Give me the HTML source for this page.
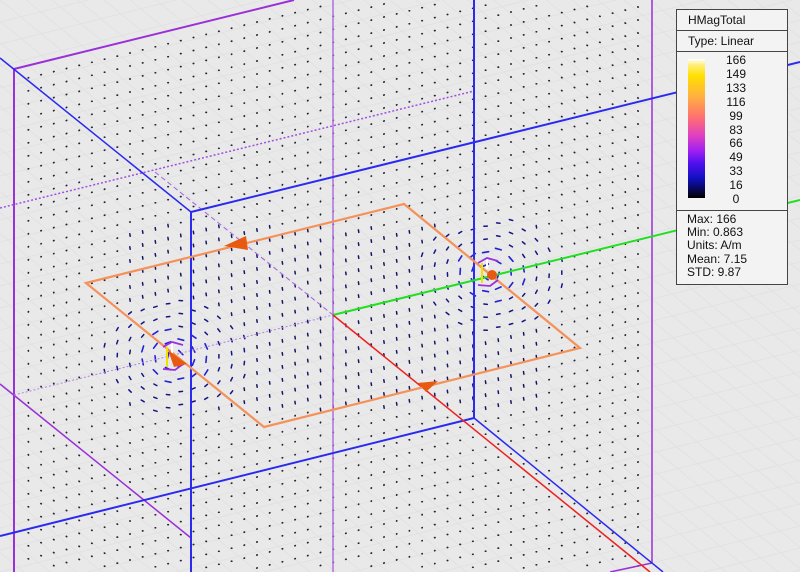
<!DOCTYPE html>
<html><head><meta charset="utf-8">
<style>
html,body{margin:0;padding:0;background:#e9e9e9;width:800px;height:572px;overflow:hidden;}
#wrap{position:relative;width:800px;height:572px;overflow:hidden;background:#e9e9e9;font-family:"Liberation Sans",sans-serif;}
svg{position:absolute;left:0;top:0;overflow:hidden;}
#leg{position:absolute;left:676px;top:9px;width:112px;height:276px;background:#f3f3f3;border:1px solid #444;box-sizing:border-box;font-size:12px;color:#111;overflow:hidden;}
#leg .r{border-bottom:1px solid #444;height:20px;line-height:20px;padding-left:11px;}
#cb{position:absolute;left:11px;top:49px;width:17px;height:139px;background:linear-gradient(to bottom,#ffffff 0%,#fff080 4%,#ffe000 12%,#ffb040 27%,#ff7070 42%,#e040c0 55%,#a020f0 66%,#5010f0 75%,#1010c0 86%,#000000 100%);}
#lbl{position:absolute;left:44px;top:44px;width:30px;text-align:center;line-height:13.9px;font-size:12px;}
#st{position:absolute;left:10px;top:203px;line-height:13.2px;font-size:12px;}
#sep{position:absolute;left:0;top:200px;width:100%;border-top:1px solid #444;}
</style></head><body>
<div id="wrap">
<svg width="800" height="572" id="sv" xmlns="http://www.w3.org/2000/svg">
<g id="grid" stroke="#e2e2e2" stroke-width="1"></g>
<g id="dots"></g>
<g fill="none" stroke-width="1.5">
<line x1="14" y1="69" x2="294" y2="0" stroke="#9a30d8" stroke-width="2"/>
<line x1="14" y1="69" x2="14" y2="572" stroke="#9a30d8" stroke-width="2"/>
<line x1="333" y1="0" x2="333" y2="572" stroke="#b070e0"/>
<line x1="652" y1="0" x2="652" y2="563" stroke="#9a30d8"/>
<line x1="652" y1="563" x2="610" y2="572" stroke="#9a30d8"/>
<line x1="0" y1="384" x2="191" y2="538" stroke="#9a30d8"/>
<line x1="0" y1="208" x2="474" y2="91" stroke="#a050e0" stroke-dasharray="2,2"/>
<line x1="14" y1="395" x2="333" y2="315" stroke="#b080e0" stroke-width="1" stroke-dasharray="2,2"/>
<line x1="155" y1="172" x2="333" y2="315" stroke="#a060e0" stroke-width="1" stroke-dasharray="5,3"/>
<line x1="0" y1="58" x2="191" y2="212" stroke="#2a2af0"/>
<line x1="191" y1="212" x2="800" y2="62" stroke="#2a2af0" stroke-width="2"/>
<line x1="191" y1="212" x2="191" y2="572" stroke="#2a2af0" stroke-width="2"/>
<line x1="474" y1="0" x2="474" y2="418" stroke="#2a2af0" stroke-width="2"/>
<line x1="0" y1="536" x2="474" y2="418" stroke="#2a2af0" stroke-width="2"/>
<line x1="474" y1="418" x2="663" y2="572" stroke="#2a2af0"/>
<line x1="333" y1="315" x2="800" y2="200" stroke="#20e020" stroke-width="2"/>
<line x1="333" y1="315" x2="650" y2="572" stroke="#f02020"/>
<polygon points="86,283 404,204 580,348 264,427" stroke="#f4925a" stroke-width="2.2"/>
</g>
<g id="loc"></g>
<g fill="#e85a10">
<polygon points="224,246 246,236 248,250"/>
<polygon points="418,383 438,381 426,392"/>
<polygon points="168,350 187,364 174,367"/>
<circle cx="492" cy="275" r="5"/>
</g>
</svg>
<div id="leg">
<div class="r">HMagTotal</div>
<div class="r">Type: Linear</div>
<div id="cb"></div>
<div id="lbl">166<br>149<br>133<br>116<br>99<br>83<br>66<br>49<br>33<br>16<br>0</div>
<div id="sep"></div>
<div id="st">Max: 166<br>Min: 0.863<br>Units: A/m<br>Mean: 7.15<br>STD: 9.87</div>
</div>
</div>
<script>
var NS="http://www.w3.org/2000/svg";
function el(p,t,a){var e=document.createElementNS(NS,t);for(var k in a)e.setAttribute(k,a[k]);p.appendChild(e);return e;}
var g=document.getElementById('grid');
/* diagonal grid lines: x = x0 + y*700/572, clipped */
for(var i=-30;i<32;i++){var x0=i*26;var s=700/572;
 var ya=Math.max(0,-x0/s), yb=Math.min(572,(800-x0)/s); if(ya>=yb)continue;
 el(g,'line',{x1:(x0+ya*s).toFixed(1),y1:ya.toFixed(1),x2:(x0+yb*s).toFixed(1),y2:yb.toFixed(1)});}
/* shallow grid lines: y = y0 - x*0.25, clipped */
for(var i=0;i<36;i++){var y0=i*22;
 var xa=Math.max(0,(y0-572)/0.25), xb=Math.min(800,y0/0.25); if(xa>=xb)continue;
 el(g,'line',{x1:xa.toFixed(1),y1:(y0-xa*0.25).toFixed(1),x2:xb.toFixed(1),y2:(y0-xb*0.25).toFixed(1)});}
var d=document.getElementById('dots');
var C=[[175,357],[490,273]];
for(var i=-5;i<60;i++){for(var j=-5;j<60;j++){
 var x=i*12.7+3, y=j*13 - i*3.1 + 6;
 if(x<20||x>648||y<4||y>568)continue;
 if(y<69-(x-14)*0.246+8)continue;
 var best=1e9,dx=0,dy=0;
 for(var k=0;k<2;k++){var ddx=x-C[k][0],ddy=(y-C[k][1])*1.3;var r=Math.sqrt(ddx*ddx+ddy*ddy);if(r<best){best=r;dx=ddx;dy=ddy;}}
 var inside=(x>120&&x<540&&y>225&&y<410);
 var len=0.4, col="#222233", w=1.7;
 var tx=-dy, ty=dx, n=Math.sqrt(tx*tx+ty*ty)||1; tx/=n; ty/=n;
 if(best<38){len=6;col="#2222d0";w=1.6;}
 else if(best<75){len=3.5;col="#151580";w=1.5;}
 else if(inside){len=2.5;col="#151560";w=1.5;tx=0.15;ty=1;}
 el(d,'line',{x1:(x-tx*len/2).toFixed(1),y1:(y-ty*len/2).toFixed(1),x2:(x+tx*len/2).toFixed(1),y2:(y+ty*len/2).toFixed(1),stroke:col,'stroke-width':w,'stroke-linecap':'round'});
}}
var l=document.getElementById('loc');
[[175,357],[490,273]].forEach(function(c){
 el(l,'line',{x1:c[0]-8,y1:c[1]-10,x2:c[0]-8,y2:c[1]+10,stroke:'#f0e000','stroke-width':2});
 el(l,'line',{x1:c[0]-3,y1:c[1]-16,x2:c[0]-3,y2:c[1]-4,stroke:'#ffffff','stroke-width':2});
 el(l,'path',{d:'M'+(c[0]-12)+' '+(c[1]-10)+' L'+(c[0]-3)+' '+(c[1]-15)+' L'+(c[0]+8)+' '+(c[1]-12)+' M'+(c[0]-12)+' '+(c[1]+12)+' L'+(c[0])+' '+(c[1]+13)+' L'+(c[0]+8)+' '+(c[1]+7),stroke:'#9a30e0','stroke-width':1.8,fill:'none'});
});
</script>
</body></html>
